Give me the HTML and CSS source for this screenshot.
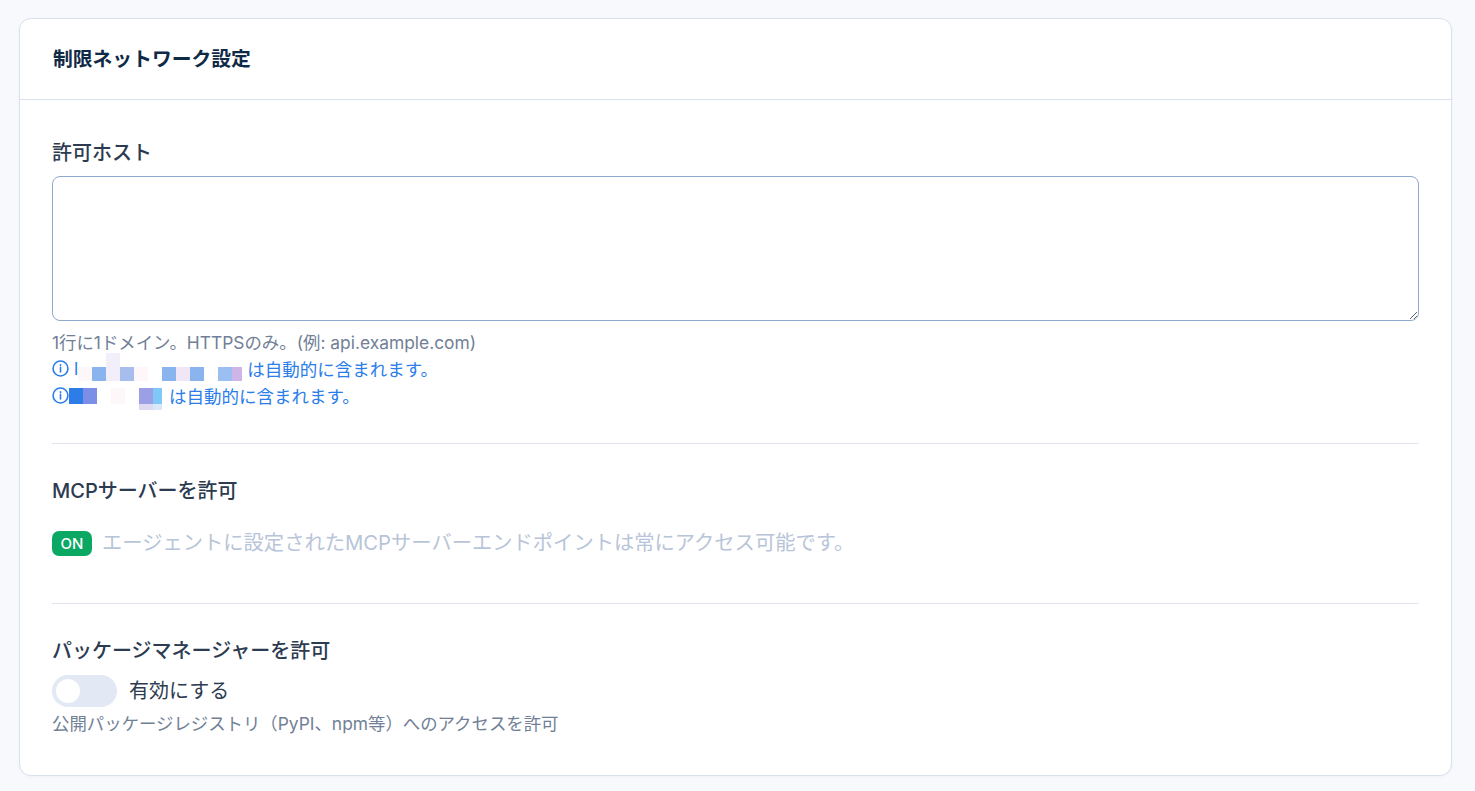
FILE: index.html
```html
<!DOCTYPE html>
<html lang="ja">
<head>
    <meta charset="UTF-8">
    <title>制限ネットワーク設定</title>
    <link rel="stylesheet" href="styles.css">
</head>
<body>
    <div class="card">
        <div class="card-header">
            <h2>制限ネットワーク設定</h2>
        </div>
        <div class="card-body">
            <section class="hosts">
                <label for="hosts" class="field-label">許可ホスト</label>
                <textarea id="hosts"></textarea>
                <p class="hint">1行に1ドメイン。HTTPSのみ。(例: api.example.com)</p>
                <p class="note">
                    <svg class="info" viewBox="0 0 16 16"><circle cx="8" cy="8" r="7"/><path d="M8 7.2v4"/><path d="M8 4.4v1"/></svg>
                    <span class="lead">l</span>
                    <span class="mosaic mosaic-long">
                        <i></i><i></i><i class="pale"></i><i></i><i></i><i></i><i></i><i></i><i></i><i></i><i></i><i></i>
                        <i class="faint"></i><i class="blue"></i><i class="pale"></i><i class="blue2"></i><i class="faint"></i><i></i><i class="blue"></i><i class="pink"></i><i class="blue"></i><i></i><i class="blue3"></i><i class="violet"></i>
                    </span>
                    <span>は自動的に含まれます。</span>
                </p>
                <p class="note">
                    <svg class="info" viewBox="0 0 16 16"><circle cx="8" cy="8" r="7"/><path d="M8 7.2v4"/><path d="M8 4.4v1"/></svg>
                    <span class="mosaic mosaic-short">
                        <i class="strong"></i><i class="indigo"></i><i></i><i class="faint"></i><i></i><i class="lilac"></i><i class="sky"></i>
                        <i></i><i></i><i></i><i></i><i></i><i class="mist"></i><i class="ice"></i>
                    </span>
                    <span>は自動的に含まれます。</span>
                </p>
            </section>
            <section class="mcp">
                <h3 class="field-label">MCPサーバーを許可</h3>
                <div class="mcp-row">
                    <span class="badge">ON</span>
                    <span class="muted">エージェントに設定されたMCPサーバーエンドポイントは常にアクセス可能です。</span>
                </div>
            </section>
            <section class="packages">
                <h3 class="field-label">パッケージマネージャーを許可</h3>
                <div class="toggle-row">
                    <span class="toggle"><span class="knob"></span></span>
                    <span class="toggle-text">有効にする</span>
                </div>
                <p class="hint">公開パッケージレジストリ（PyPI、npm等）へのアクセスを許可</p>
            </section>
        </div>
    </div>
</body>
</html>
```

FILE: styles.css
```css
* {
    box-sizing: border-box;
}
body {
    margin: 0;
    padding: 18px 23px 15px 19px;
    background-color: #f8f9fc;
    font-family: Inter, "Noto Sans CJK JP", sans-serif;
    color: #1e293b;
}
.card {
    height: 758px;
    background-color: #fff;
    border: 1px solid #d9e1ec;
    border-radius: 12px;
    box-shadow: 0 1px 3px rgba(30,41,59,0.04);
}
.card-header {
    height: 81px;
    padding: 0 33px 0 32px;
    display: flex;
    align-items: center;
    border-bottom: 1px solid #d9e1ec;
}
h2 {
    margin: 0;
    padding-left: 1px;
    font-size: 19.8px;
    line-height: 28px;
    font-weight: 700;
    color: #0f2a47;
}
.card-body {
    padding: 37px 32px 0;
}
.field-label {
    display: block;
    margin: 0;
    font-size: 20px;
    line-height: 32px;
    font-weight: 500;
    color: #2d3b50;
}
textarea {
    display: block;
    width: 100%;
    height: 145px;
    margin-top: 7px;
    border: 1px solid #8fa8cc;
    border-radius: 8px;
    background-color: #fff;
    resize: vertical;
}
.hosts {
    padding-bottom: 34px;
    border-bottom: 1px solid #e0e5ed;
}
.hint {
    margin: 9px 0 0;
    font-size: 17.4px;
    line-height: 25px;
    color: #718096;
}
.note {
    margin: 0;
    height: 27px;
    display: flex;
    align-items: center;
    font-size: 17.5px;
    color: #2b7de9;
}
.info {
    width: 17px;
    height: 17px;
    fill: none;
    stroke: #2b7de9;
    stroke-width: 1.5;
    stroke-linecap: round;
}
.lead {
    margin-left: 5px;
    line-height: 1;
}
.mosaic {
    display: grid;
    grid-auto-rows: 14px;
    margin-right: 5px;
}
.mosaic-long {
    grid-template-columns: repeat(11, 14px) 10px;
    margin-top: -3px;
    height: 28px;
}
.mosaic-short {
    grid-template-columns: repeat(6, 14px) 9px;
    grid-template-rows: 16px 6px;
    margin-right: 7px;
    margin-top: 6px;
}
.mosaic .pale { background-color: #f3effa; }
.mosaic .faint { background-color: #fdf7fa; }
.mosaic .blue { background-color: #8ab4ee; }
.mosaic .blue2 { background-color: #a6bdee; }
.mosaic .blue3 { background-color: #9abff0; }
.mosaic .pink { background-color: #f0e6f5; }
.mosaic .violet { background-color: #cdb5e8; }
.mosaic .strong { background-color: #2d7de8; }
.mosaic .indigo { background-color: #7b8fe6; }
.mosaic .lilac { background-color: #9a9fe6; }
.mosaic .sky { background-color: #80c8f8; }
.mosaic .mist { background-color: #ded8f0; }
.mosaic .ice { background-color: #d8e8fa; }
.mcp {
    padding: 31px 0 45px;
    border-bottom: 1px solid #e0e5ed;
}
.mcp-row {
    margin-top: 21px;
    display: flex;
    align-items: center;
    gap: 10px;
}
.badge {
    width: 40px;
    height: 25px;
    display: flex;
    align-items: center;
    justify-content: center;
    border-radius: 7px;
    background-color: #0ba864;
    color: #fff;
    font-size: 15px;
    font-weight: 500;
}
.muted {
    font-size: 20.3px;
    line-height: 30px;
    color: #b8c4d8;
}
.packages {
    padding-top: 31px;
}
.toggle-row {
    margin-top: 8px;
    display: flex;
    align-items: center;
    gap: 12px;
}
.toggle {
    width: 65px;
    height: 32px;
    padding: 4px;
    border-radius: 16px;
    background-color: #e2e9f5;
}
.knob {
    display: block;
    width: 24px;
    height: 24px;
    border-radius: 50%;
    background-color: #fff;
}
.toggle-text {
    font-size: 20px;
    line-height: 32px;
    color: #2d3b50;
}
.packages .hint {
    margin-top: 4px;
}
```
